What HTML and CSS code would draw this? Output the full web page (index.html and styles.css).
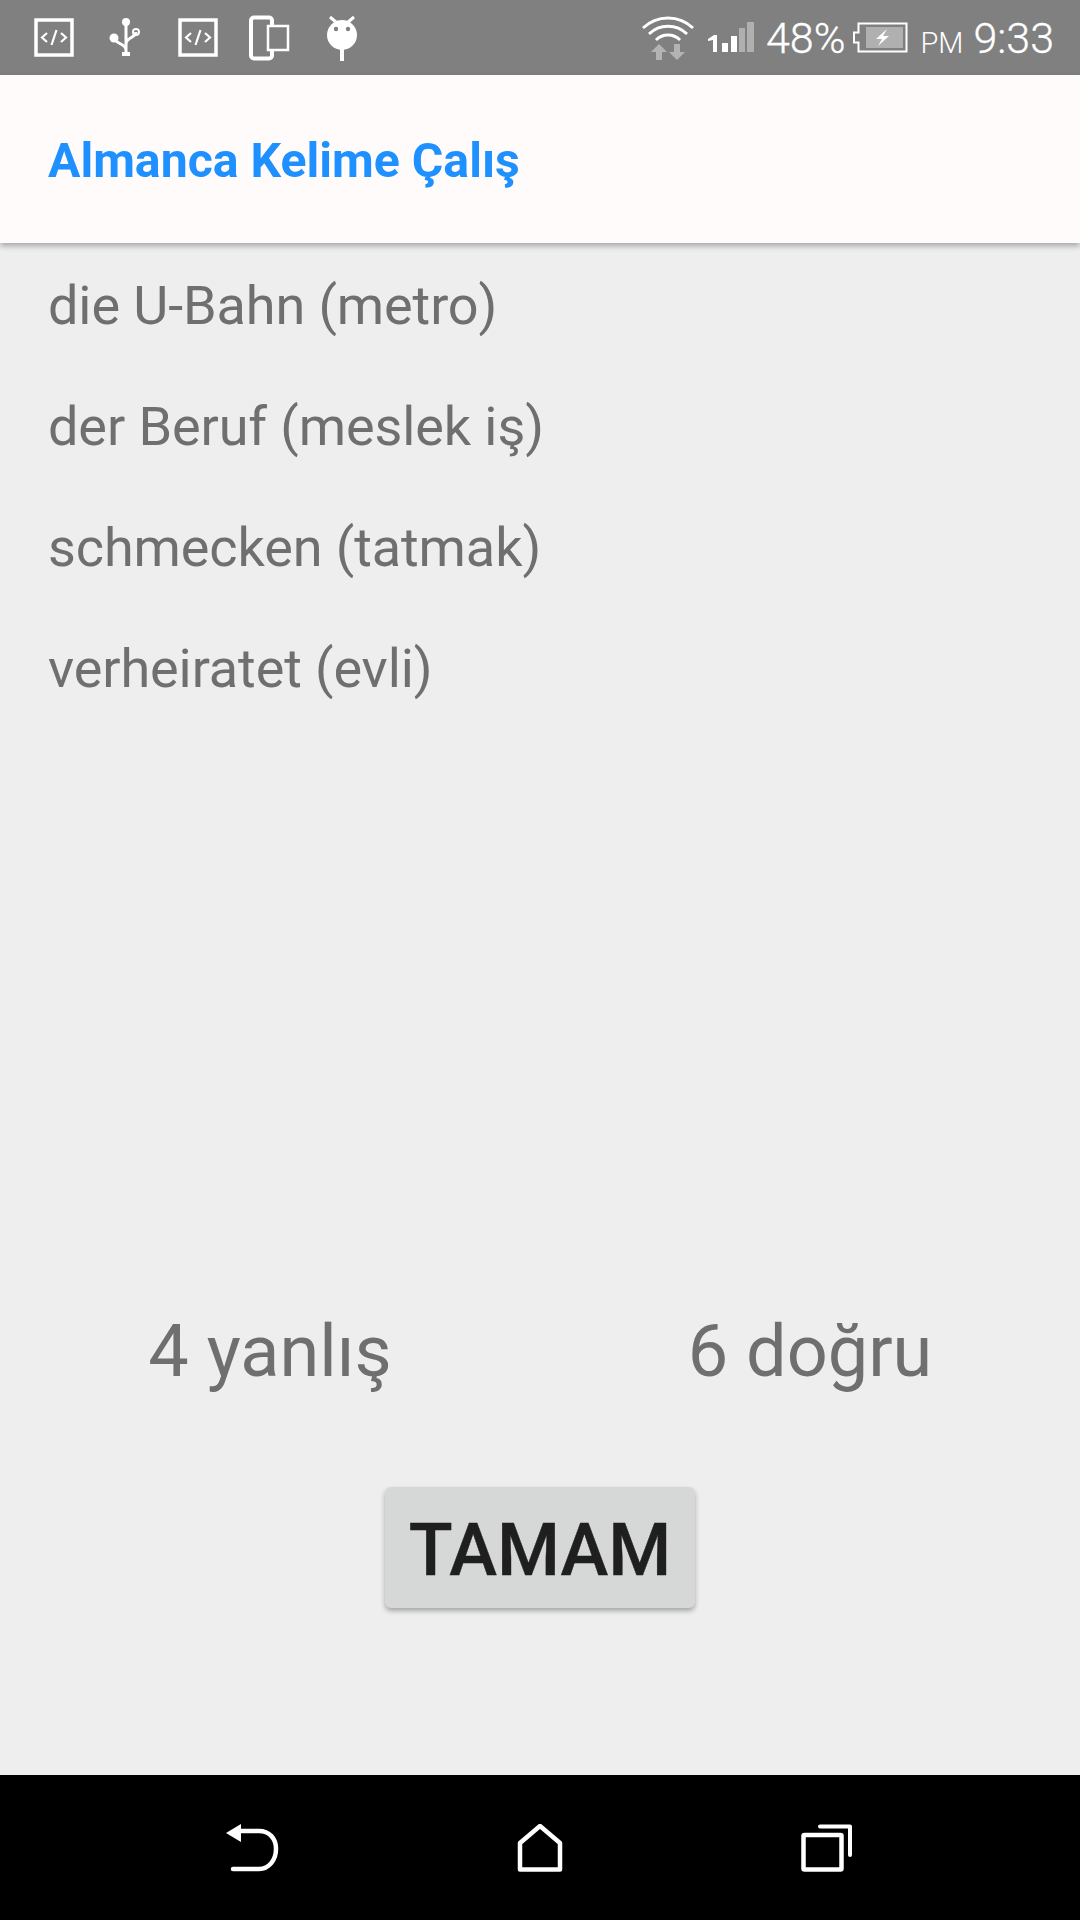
FILE: index.html
```html
<!doctype html>
<html>
<head>
<meta charset="utf-8">
<title>Almanca Kelime Çalış</title>
<link rel="stylesheet" href="styles.css">
</head>

<body>
<div class="status">
	<div class="status-left">
		<svg class="ico" viewBox="0 0 48 75"><rect x="6" y="20" width="36" height="35" fill="none" stroke="#fff" stroke-width="3.500"/><path d="M17 33l-5 4.500 5 4.500M31 33l5 4.500-5 4.500M26.500 30l-5 15" fill="none" stroke="#fff" stroke-width="2.200"/></svg>
		<svg class="ico" viewBox="0 0 48 75"><path d="M24 22V55M12 38c2 6 12 6 12 12M34 32c0 6-10 5-10 12" fill="none" stroke="#fff" stroke-width="3"/><circle cx="24" cy="22" r="4" fill="#fff"/><circle cx="12" cy="38" r="4.500" fill="#fff"/><circle cx="34" cy="32" r="3" fill="none" stroke="#fff" stroke-width="2"/><rect x="20" y="52" width="8" height="4" fill="#fff"/></svg>
		<svg class="ico" viewBox="0 0 48 75"><rect x="6" y="20" width="36" height="35" fill="none" stroke="#fff" stroke-width="3.500"/><path d="M17 33l-5 4.500 5 4.500M31 33l5 4.500-5 4.500M26.500 30l-5 15" fill="none" stroke="#fff" stroke-width="2.200"/></svg>
		<svg class="ico" viewBox="0 0 48 75"><rect x="5" y="17.500" width="21" height="41" rx="3" fill="none" stroke="#fff" stroke-width="4"/><rect x="22" y="26" width="20" height="24" fill="#808080" stroke="#fff" stroke-width="2.500"/></svg>
		<svg class="ico" viewBox="0 0 48 75"><circle cx="24" cy="35" r="15" fill="#fff"/><path d="M12 17l7 6M36 17l-7 6" stroke="#fff" stroke-width="3"/><circle cx="18" cy="29" r="2.200" fill="#808080"/><circle cx="30" cy="29" r="2.200" fill="#808080"/><rect x="22" y="48" width="4" height="13" fill="#fff"/></svg>
	</div>
	<div class="status-right">
		<svg class="wifi" viewBox="0 0 60 75"><path d="M5 28a36 36 0 0 1 50 0M11 34a27 27 0 0 1 38 0M18 40a17 17 0 0 1 24 0" fill="none" stroke="#fff" stroke-width="3"/><path d="M21 44l8 8h-5v8h-6v-8h-5zM39 60l8-8h-5v-8h-6v8h-5z" fill="#b3b3b3"/></svg>
		<svg class="signal" viewBox="0 0 50 75"><path d="M0 39l6-4h3v17h-4v-12l-5 1z" fill="#fff"/><rect x="14" y="43" width="6" height="9" fill="#fff"/><rect x="23" y="36" width="6" height="16" fill="#fff"/><rect x="31" y="28" width="6" height="24" fill="#b0b0b0"/><rect x="39" y="22" width="7" height="30" fill="#b0b0b0"/></svg>
		<span class="pct">48%</span>
		<svg class="batt" viewBox="0 0 56 75"><path d="M6.500 23.500H54.500V51.500H6.500V42.500H2V32.500H6.500z" fill="none" stroke="#fff" stroke-width="2"/><rect x="14" y="27" width="37" height="21" fill="#b0b0b0"/><path d="M35 29l-11 10h6l-4 7 11-10h-6z" fill="#fff"/></svg>
		<span class="ampm">PM</span>
		<span class="clock">9:33</span>
	</div>
</div>

<div class="appbar">Almanca Kelime Çalış</div>

<div class="content">
	<ul class="words">
		<li>die U-Bahn (metro)</li>
		<li>der Beruf (meslek iş)</li>
		<li>schmecken (tatmak)</li>
		<li>verheiratet (evli)</li>
	</ul>
	<div class="score">
		<span>4 yanlış</span>
		<span>6 doğru</span>
	</div>
	<div class="actions">
		<button class="ok">TAMAM</button>
	</div>
</div>

<div class="nav">
	<svg class="nav-back" viewBox="0 0 54 48"><path d="M7 45H33C43 45 50 36 50 25S43 7 33 7H14" fill="none" stroke="#fff" stroke-width="4.500" stroke-linecap="round"/><path d="M0 9L15 0V18z" fill="#fff"/></svg>
	<svg class="nav-home" viewBox="0 0 46 48"><path d="M3 19L23 2 43 19V45.500H3z" fill="none" stroke="#fff" stroke-width="4.500" stroke-linejoin="round"/></svg>
	<svg class="nav-recent" viewBox="0 0 52 48"><rect x="2.500" y="11" width="38" height="34.500" rx="1" fill="none" stroke="#fff" stroke-width="4.500"/><path d="M19 2.500H49V31" fill="none" stroke="#fff" stroke-width="4" stroke-linecap="round" stroke-linejoin="round"/></svg>
</div>
</body>
</html>
```

FILE: styles.css
```css
* {
	box-sizing: border-box;
}
body {
	margin: 0;
	height: 1920px;
	display: flex;
	flex-direction: column;
	font-family: Roboto, "Liberation Sans", sans-serif;
	background: #eeeeee;
	overflow: hidden;
}
.status {
	height: 75px;
	background: #808080;
	display: flex;
	justify-content: space-between;
	padding: 0 26px 0 30px;
	color: #fff;
	flex: none;
}
.status-left {
	display: flex;
	gap: 24px;
}
.ico {
	width: 48px;
	height: 75px;
}
.status-right {
	display: flex;
	align-items: center;
}
.wifi {
	width: 60px;
	height: 75px;
}
.signal {
	width: 50px;
	height: 75px;
	margin-left: 10px;
}
.batt {
	width: 56px;
	height: 75px;
	margin-left: 7px;
}
.pct, .clock {
	font-size: 43px;
	font-weight: 300;
	-webkit-text-stroke: 0.3px #fff;
}
.pct {
	margin-left: 8px;
}
.ampm {
	font-size: 29px;
	font-weight: 300;
	margin: 10px 0 0 12px;
}
.clock {
	margin-left: 10px;
}
.appbar {
	height: 168px;
	flex: none;
	background: #fffbfa;
	color: #1e90ff;
	font-size: 48.200px;
	font-weight: 700;
	line-height: 168px;
	padding: 2px 0 0 48px;
	box-shadow: 0 3px 6px rgba(0,0,0,.3);
	position: relative;
}
.content {
	flex: 1;
	display: flex;
	flex-direction: column;
	color: #6f6f6f;
}
.words {
	list-style: none;
	margin: 0;
	padding: 2px 0 0 48px;
	flex: 1;
}
.words li {
	height: 121px;
	line-height: 121px;
	font-size: 54px;
	letter-spacing: -0.1px;
}
.score {
	display: grid;
	grid-template-columns: 1fr 1fr;
	text-align: center;
	font-size: 72px;
	line-height: 120px;
	margin-bottom: 75px;
	padding-top: 1px;
}
.actions {
	display: flex;
	justify-content: center;
	padding-bottom: 167px;
}
.ok {
	width: 310px;
	height: 121px;
	border: none;
	border-radius: 6px;
	background: #d6d7d7;
	color: #1f1f1f;
	font-family: Roboto, "Liberation Sans", sans-serif;
	font-size: 72px;
	font-weight: 500;
	-webkit-text-stroke: 0.4px #1f1f1f;
	padding: 6px 0 0;
	box-shadow: 0 3px 5px rgba(0,0,0,.3);
}
.nav {
	height: 145px;
	flex: none;
	background: #000;
	display: grid;
	grid-template-columns: repeat(3, 287px);
	justify-content: center;
	justify-items: center;
	align-items: center;
}
.nav-back, .nav-home, .nav-recent {
	height: 48px;
}
.nav-back {
	width: 54px;
}
.nav-home {
	width: 46px;
}
.nav-recent {
	width: 52px;
}
```
